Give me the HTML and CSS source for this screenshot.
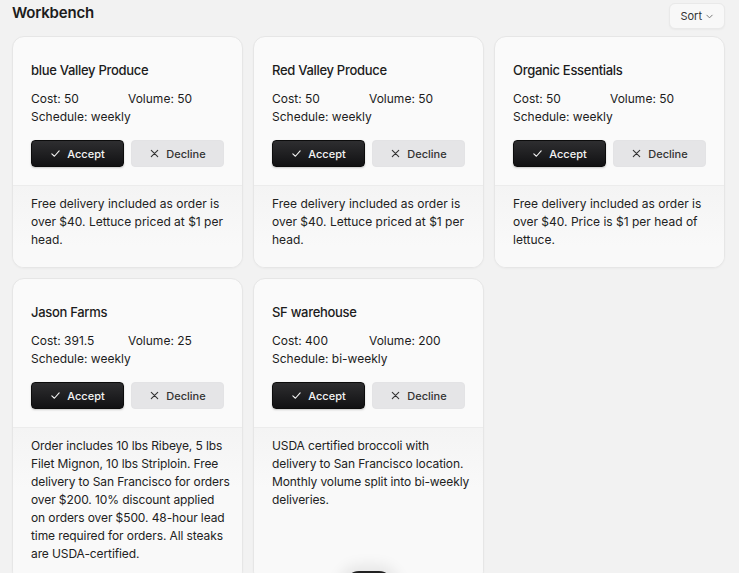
FILE: index.html
```html
<!DOCTYPE html>
<html>
<head>
<meta charset="utf-8">
<link rel="stylesheet" href="styles.css">
</head>
<body>
<header class="topbar">
  <h1 class="title">Workbench</h1>
  <button class="sort">Sort <svg width="9" height="9" viewBox="0 0 10 10"><path d="M2 3.5 L5 6.5 L8 3.5" fill="none" stroke="#777" stroke-width="1.1" stroke-linecap="round" stroke-linejoin="round"/></svg></button>
</header>
<main class="grid">
  <section class="card">
    <div class="card-top">
      <h2 class="name">blue Valley Produce</h2>
      <div class="meta"><span>Cost: 50</span><span>Volume: 50</span></div>
      <div class="sched">Schedule: weekly</div>
      <div class="actions">
        <button class="btn accept"><svg class="ic" viewBox="0 0 12 12"><path d="M2 6.4 L4.8 9 L10 3.2" fill="none" stroke="currentColor" stroke-width="1.2" stroke-linecap="round" stroke-linejoin="round"/></svg>Accept</button>
        <button class="btn decline"><svg class="ic" viewBox="0 0 12 12"><path d="M2.5 2.5 L9.5 9.5 M9.5 2.5 L2.5 9.5" fill="none" stroke="currentColor" stroke-width="1.2" stroke-linecap="round"/></svg>Decline</button>
      </div>
    </div>
    <p class="desc">Free delivery included as order is over $40. Lettuce priced at $1 per head.</p>
  </section>
  <section class="card">
    <div class="card-top">
      <h2 class="name">Red Valley Produce</h2>
      <div class="meta"><span>Cost: 50</span><span>Volume: 50</span></div>
      <div class="sched">Schedule: weekly</div>
      <div class="actions">
        <button class="btn accept"><svg class="ic" viewBox="0 0 12 12"><path d="M2 6.4 L4.8 9 L10 3.2" fill="none" stroke="currentColor" stroke-width="1.2" stroke-linecap="round" stroke-linejoin="round"/></svg>Accept</button>
        <button class="btn decline"><svg class="ic" viewBox="0 0 12 12"><path d="M2.5 2.5 L9.5 9.5 M9.5 2.5 L2.5 9.5" fill="none" stroke="currentColor" stroke-width="1.2" stroke-linecap="round"/></svg>Decline</button>
      </div>
    </div>
    <p class="desc">Free delivery included as order is over $40. Lettuce priced at $1 per head.</p>
  </section>
  <section class="card">
    <div class="card-top">
      <h2 class="name">Organic Essentials</h2>
      <div class="meta"><span>Cost: 50</span><span>Volume: 50</span></div>
      <div class="sched">Schedule: weekly</div>
      <div class="actions">
        <button class="btn accept"><svg class="ic" viewBox="0 0 12 12"><path d="M2 6.4 L4.8 9 L10 3.2" fill="none" stroke="currentColor" stroke-width="1.2" stroke-linecap="round" stroke-linejoin="round"/></svg>Accept</button>
        <button class="btn decline"><svg class="ic" viewBox="0 0 12 12"><path d="M2.5 2.5 L9.5 9.5 M9.5 2.5 L2.5 9.5" fill="none" stroke="currentColor" stroke-width="1.2" stroke-linecap="round"/></svg>Decline</button>
      </div>
    </div>
    <p class="desc">Free delivery included as order is over $40. Price is $1 per head of lettuce.</p>
  </section>
  <section class="card">
    <div class="card-top">
      <h2 class="name">Jason Farms</h2>
      <div class="meta"><span>Cost: 391.5</span><span>Volume: 25</span></div>
      <div class="sched">Schedule: weekly</div>
      <div class="actions">
        <button class="btn accept"><svg class="ic" viewBox="0 0 12 12"><path d="M2 6.4 L4.8 9 L10 3.2" fill="none" stroke="currentColor" stroke-width="1.2" stroke-linecap="round" stroke-linejoin="round"/></svg>Accept</button>
        <button class="btn decline"><svg class="ic" viewBox="0 0 12 12"><path d="M2.5 2.5 L9.5 9.5 M9.5 2.5 L2.5 9.5" fill="none" stroke="currentColor" stroke-width="1.2" stroke-linecap="round"/></svg>Decline</button>
      </div>
    </div>
    <p class="desc nowrap">Order includes 10 lbs Ribeye, 5 lbs<br>Filet Mignon, 10 lbs Striploin. Free<br>delivery to San Francisco for orders<br>over $200. 10% discount applied<br>on orders over $500. 48-hour lead<br>time required for orders. All steaks<br>are USDA-certified.</p>
  </section>
  <section class="card">
    <div class="card-top">
      <h2 class="name">SF warehouse</h2>
      <div class="meta"><span>Cost: 400</span><span>Volume: 200</span></div>
      <div class="sched">Schedule: bi-weekly</div>
      <div class="actions">
        <button class="btn accept"><svg class="ic" viewBox="0 0 12 12"><path d="M2 6.4 L4.8 9 L10 3.2" fill="none" stroke="currentColor" stroke-width="1.2" stroke-linecap="round" stroke-linejoin="round"/></svg>Accept</button>
        <button class="btn decline"><svg class="ic" viewBox="0 0 12 12"><path d="M2.5 2.5 L9.5 9.5 M9.5 2.5 L2.5 9.5" fill="none" stroke="currentColor" stroke-width="1.2" stroke-linecap="round"/></svg>Decline</button>
      </div>
    </div>
    <p class="desc nowrap">USDA certified broccoli with<br>delivery to San Francisco location.<br>Monthly volume split into bi-weekly<br>deliveries.</p>
  </section>
</main>
<div class="dock"></div>
</body>
</html>
```
FILE: styles.css
```css
html, body {
  margin: 0;
  padding: 0;
  background: #f2f2f2;
  font-family: Inter, "Noto Sans", sans-serif;
  color: #1c1c1c;
  overflow: hidden;
  height: 573px;
}
.topbar {
  display: flex;
  justify-content: space-between;
  align-items: flex-start;
  padding: 3px 14px 0 12px;
  height: 33px;
}
.title {
  margin: 0;
  font-size: 15px;
  line-height: 20px;
  font-weight: 600;
  letter-spacing: -0.2px;
}
.sort {
  display: flex;
  align-items: center;
  gap: 3px;
  height: 26px;
  padding: 0 10px;
  border: 1px solid #e9e9e9;
  border-radius: 6px;
  background: #f8f8f8;
  font-family: inherit;
  font-size: 11px;
  color: #333;
  box-shadow: 0 1px 2px rgba(0,0,0,0.04);
}
.grid {
  display: grid;
  grid-template-columns: repeat(3, 231px);
  column-gap: 10px;
  row-gap: 10px;
  padding: 0 12px;
}
.card {
  display: flex;
  flex-direction: column;
  background: #fafafa;
  border: 1px solid #e6e6e6;
  border-radius: 12px;
  overflow: hidden;
  box-shadow: 0 1px 2px rgba(0,0,0,0.03);
}
.card-top {
  padding: 23px 18px 18px;
  border-bottom: 1px solid #ececec;
}
.name {
  margin: 0 0 10px;
  font-size: 13px;
  line-height: 20px;
  font-weight: 500;
  letter-spacing: -0.3px;
}
.meta {
  display: grid;
  grid-template-columns: 97px auto;
  font-size: 12px;
  line-height: 18px;
}
.sched {
  font-size: 12px;
  line-height: 18px;
  margin-bottom: 14px;
}
.actions {
  display: grid;
  grid-template-columns: 93px 93px;
  column-gap: 7px;
}
.btn {
  display: flex;
  align-items: center;
  justify-content: center;
  gap: 6px;
  height: 27px;
  border-radius: 4px;
  font-family: inherit;
  font-size: 11px;
  font-weight: 500;
  padding: 0;
}
.ic {
  width: 11px;
  height: 11px;
}
.accept {
  color: #f4f4f4;
  border: 1px solid #0c0c0c;
  background: linear-gradient(#2e2e30, #111113);
  box-shadow: 0 1px 2px rgba(0,0,0,0.2);
}
.decline {
  color: #333;
  border: 1px solid #e3e3e5;
  background: #e5e5e7;
}
.desc {
  flex: 1;
  margin: 0;
  padding: 9px 16px 18px 18px;
  font-size: 12px;
  line-height: 18px;
  background: linear-gradient(#f4f4f4, #f9f9f9 60px);
  color: #222;
}
.nowrap {
  white-space: nowrap;
  letter-spacing: -0.1px;
}
.dock {
  position: fixed;
  left: 345px;
  top: 571px;
  width: 48px;
  height: 28px;
  border-radius: 14px;
  background: #222;
  box-shadow: 0 0 14px 6px rgba(0,0,0,0.08);
}
```
